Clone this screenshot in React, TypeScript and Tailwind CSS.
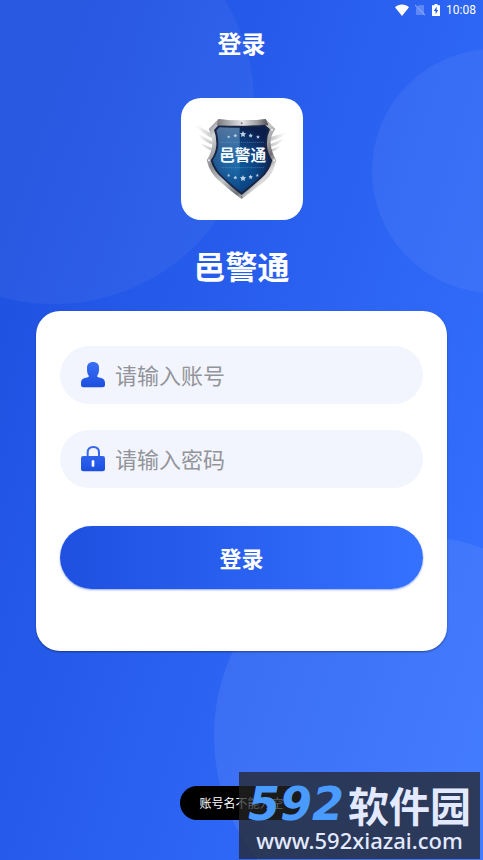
import { useState } from 'react'

const stars = [
    { x: 98, y: 78, r: 5 },
    { x: 118, y: 74, r: 6 },
    { x: 141, y: 70, r: 10 },
    { x: 164, y: 74, r: 7 },
    { x: 186, y: 78, r: 6 },
    { x: 98, y: 193, r: 5 },
    { x: 118, y: 200, r: 6 },
    { x: 141, y: 202, r: 10 },
    { x: 164, y: 198, r: 7 },
    { x: 184, y: 193, r: 5 },
]

function starPoints(x: number, y: number, r: number) {
    return Array.from({ length: 10 }, (_, i) => {
        const angle = (Math.PI / 5) * i - Math.PI / 2
        const radius = i % 2 ? r * 0.5 : r
        return `${x + radius * Math.cos(angle)},${y + radius * Math.sin(angle)}`
    }).join(' ')
}

function StatusBar() {
    return (
        <div className="flex h-5 items-center justify-end pr-[7px] text-white">
            <svg className="h-3 w-[14px]" viewBox="0 0 14 12" fill="currentColor" aria-hidden="true">
                <path d="M0 3.2C3.8-.4 10.2-.4 14 3.2L7 12z" />
            </svg>
            <svg className="ml-[6px] h-3 w-[10px] opacity-40" viewBox="0 0 10 12" aria-hidden="true">
                <path d="M4 1h5v10H1V4z" fill="currentColor" opacity=".6" />
                <path d="M0 1l10 10" stroke="#fff" strokeWidth="1.2" />
            </svg>
            <svg className="ml-[7px] h-3 w-2" viewBox="0 0 8 12" aria-hidden="true">
                <path d="M2.5 0h3v1.2H8V12H0V1.2h2.5z" fill="currentColor" />
                <path d="M4.7 2.8L1.8 7h1.8v3.2L6.2 6H4.7z" fill="#2559e8" />
            </svg>
            <span className="ml-[6px] font-[Roboto,sans-serif] text-[12px] leading-5">10:08</span>
        </div>
    )
}

function ShieldLogo() {
    return (
        <svg className="h-24 w-[92px]" viewBox="0 0 276 288" role="img" aria-label="邑警通">
            <defs>
                <linearGradient id="rim" x1="0" y1="0" x2="1" y2="1">
                    <stop offset="0" stopColor="#6d7075" />
                    <stop offset=".15" stopColor="#d5d6d8" />
                    <stop offset=".32" stopColor="#8b8d91" />
                    <stop offset=".5" stopColor="#c4c5c8" />
                    <stop offset=".68" stopColor="#6f7073" />
                    <stop offset=".78" stopColor="#dcdcde" />
                    <stop offset="1" stopColor="#77787c" />
                </linearGradient>
                <linearGradient id="rimTop" x1="0" y1="0" x2="1" y2="0">
                    <stop offset="0" stopColor="#77797d" />
                    <stop offset=".5" stopColor="#e6e6e8" />
                    <stop offset=".8" stopColor="#9a9a9e" />
                    <stop offset="1" stopColor="#4d4e52" />
                </linearGradient>
                <radialGradient id="field" cx=".42" cy=".62" r=".65">
                    <stop offset="0" stopColor="#0e5c9c" />
                    <stop offset=".5" stopColor="#0d4584" />
                    <stop offset="1" stopColor="#0b1d4b" />
                </radialGradient>
                <linearGradient id="gloss" x1="0" y1="0" x2="0" y2="1">
                    <stop offset="0" stopColor="#8fc0e6" stopOpacity=".55" />
                    <stop offset="1" stopColor="#2f8acb" stopOpacity=".05" />
                </linearGradient>
                <linearGradient id="wingLeft" x1="0" y1="0" x2="1" y2="0">
                    <stop offset="0" stopColor="#fff" />
                    <stop offset=".3" stopColor="#f6f6f6" />
                    <stop offset="1" stopColor="#c4c5c7" />
                </linearGradient>
                <linearGradient id="wingRight" x1="1" y1="0" x2="0" y2="0">
                    <stop offset="0" stopColor="#fff" />
                    <stop offset=".3" stopColor="#f6f6f6" />
                    <stop offset="1" stopColor="#c4c5c7" />
                </linearGradient>
            </defs>
            <path fill="url(#wingLeft)" d="M-8 36L50 70V82Q16 68-8 36zM8 70L50 92V101Q18 92 8 70zM14 97L48 111V119Q24 112 14 97z" />
            <path fill="url(#wingRight)" d="M276 62L224 78V90Q256 82 276 62zM266 82L224 99V107Q250 102 266 82zM254 106L226 115V122Q242 118 254 106z" />
            <path fill="url(#rim)" d="M67 24Q137 34 209 24L238 54Q222 76 224 98Q226 122 241 148Q233 188 206 210Q170 240 137 265Q104 240 70 210Q42 188 32 148Q48 122 49 98Q50 76 38 54z" />
            <path fill="url(#rimTop)" d="M67 24Q137 34 209 24L217 42Q137 52 62 42z" />
            <path fill="#182443" d="M67 43Q137 47 207 41L222 55Q211 78 213 104Q215 128 229 148Q220 182 196 202Q164 230 137 252Q108 230 79 202Q52 180 44 148Q60 126 61 102Q62 76 54 57z" />
            <path fill="url(#field)" d="M70 49Q137 51 204 48L215 57Q206 80 207 104Q210 130 223 148Q213 180 190 200Q160 226 137 244Q112 226 84 200Q59 178 50 148Q66 126 67 102Q67 76 61 59z" />
            <path fill="url(#gloss)" d="M70 49Q102 51 131 50V240L84 200Q59 178 50 148Q66 126 67 102Q67 76 61 59z" />
            <path d="M76 94H204M76 170H204" stroke="#8bb8dc" strokeWidth="2" strokeDasharray="3 3" opacity=".7" />
            {stars.map((star) => (
                <polygon key={`${star.x}-${star.y}`} points={starPoints(star.x, star.y, star.r)} fill="#b9d0e4" />
            ))}
            <text x="140" y="149" textAnchor="middle" fontSize="47" fontWeight="700" fill="#f3f8fc" className="font-['Noto_Sans_CJK_SC',sans-serif]">
                邑警通
            </text>
            <circle cx="137" cy="37" r="3" fill="#77787b" />
            <circle cx="228" cy="56" r="3" fill="#f4f4f5" />
            <circle cx="39" cy="148" r="3" fill="#f4f4f5" />
            <circle cx="234" cy="148" r="3" fill="#f4f4f5" />
            <circle cx="137" cy="258" r="3" fill="#77787b" />
        </svg>
    )
}

function UserIcon() {
    return (
        <svg className="h-[26px] w-6 shrink-0" viewBox="0 0 72 78" aria-hidden="true">
            <defs>
                <linearGradient id="userFill" x1="0" y1="0" x2="0" y2="1">
                    <stop offset="0" stopColor="#3a6ff5" />
                    <stop offset="1" stopColor="#1c4fe0" />
                </linearGradient>
            </defs>
            <path fill="url(#userFill)" d="M36 0C48 0 54 7 54 17V22C54 32 52 38 48 42C49 46 52 46 58 47C68 49 72 54 72 63V69Q72 76 65 76H7Q0 76 0 69V63C0 54 4 49 14 47C20 46 23 46 24 42C20 38 18 32 18 22V17C18 7 24 0 36 0z" />
        </svg>
    )
}

function LockIcon() {
    return (
        <svg className="h-[26px] w-6 shrink-0" viewBox="0 0 72 78" aria-hidden="true">
            <defs>
                <linearGradient id="lockFill" x1="0" y1="0" x2="0" y2="1">
                    <stop offset="0" stopColor="#2f63ee" />
                    <stop offset="1" stopColor="#1c4fe0" />
                </linearGradient>
            </defs>
            <path d="M20 34V20C20 9 27 3 37 3S54 9 54 20V34" fill="none" stroke="#3568ee" strokeWidth="6" />
            <rect x="0" y="30" width="72" height="46" rx="7" fill="url(#lockFill)" />
            <rect x="32" y="43" width="8" height="19" rx="2" fill="#fff" />
        </svg>
    )
}

export default function App() {
    const [account, setAccount] = useState('')
    const [password, setPassword] = useState('')

    return (
        <div className="relative isolate flex min-h-screen flex-col overflow-hidden bg-[linear-gradient(108deg,#1f50e0_8%,#3571ff_94%)] font-['Noto_Sans_CJK_SC',sans-serif]">
            <div className="absolute -top-24 -left-[146px] -z-10 size-[400px] rounded-full bg-linear-to-r from-white/5 to-white/4" />
            <div className="absolute top-[49px] -right-[133px] -z-10 size-[244px] rounded-full bg-white/5" />
            <div className="absolute -right-[131px] -bottom-[76px] -z-10 size-[400px] rounded-full bg-white/7" />

            <StatusBar />
            <header className="flex h-[46px] items-center justify-center">
                <h1 className="text-[24px] leading-8 font-bold text-white">登录</h1>
            </header>

            <main className="flex flex-col px-9">
                <div className="mt-8 flex size-[122px] items-center justify-center self-center rounded-[20px] bg-white">
                    <ShieldLogo />
                </div>
                <h2 className="mt-[23px] text-center text-[32px] leading-[44px] font-bold text-white">邑警通</h2>

                <form
                    className="mt-6 flex flex-col rounded-3xl bg-white px-6 pt-[35px] pb-[62px] shadow-[0_1px_2px_rgba(0,0,0,0.4)]"
                    onSubmit={(e) => e.preventDefault()}
                >
                    <label className="flex h-[58px] items-center gap-[10px] rounded-full bg-[#f2f5fe] px-[21px]">
                        <UserIcon />
                        <input
                            type="text"
                            aria-label="账号"
                            placeholder="请输入账号"
                            value={account}
                            onChange={(e) => setAccount(e.target.value)}
                            className="h-full min-w-0 flex-1 bg-transparent pb-[2px] text-[22px] text-gray-800 outline-none placeholder:text-[#929499]"
                        />
                    </label>
                    <label className="mt-[26px] flex h-[58px] items-center gap-[10px] rounded-full bg-[#f2f5fe] px-[21px]">
                        <LockIcon />
                        <input
                            type="password"
                            aria-label="密码"
                            placeholder="请输入密码"
                            value={password}
                            onChange={(e) => setPassword(e.target.value)}
                            className="h-full min-w-0 flex-1 bg-transparent pb-[2px] text-[22px] text-gray-800 outline-none placeholder:text-[#929499]"
                        />
                    </label>
                    <button
                        type="submit"
                        className="mt-[38px] h-[63px] rounded-full bg-linear-to-r from-[#1f50e0] to-[#3571ff] text-[22px] font-bold text-white shadow-[0_1px_2px_rgba(30,80,224,0.5)]"
                    >
                        登录
                    </button>
                </form>
            </main>

            <div role="status" className="absolute bottom-10 left-1/2 -translate-x-1/2 rounded-full bg-black px-5 py-2 text-[12px] leading-[18px] whitespace-nowrap text-white">
                账号名不能为空
            </div>

            <div className="absolute right-[3px] bottom-px flex h-[87px] w-[241px] flex-col items-center justify-center bg-[#242424]/75 whitespace-nowrap">
                <div className="flex items-center gap-1">
                    <span className="font-['DejaVu_Sans',sans-serif] text-[46px] leading-[48px] font-bold text-[#4a9bff] italic">592</span>
                    <span className="text-[41px] leading-[48px] font-bold text-[#e3eaff]">软件园</span>
                </div>
                <span className="font-['Noto_Sans',sans-serif] text-[22px] leading-6 font-medium text-[#e3eaff]">www.592xiazai.com</span>
            </div>
        </div>
    )
}
